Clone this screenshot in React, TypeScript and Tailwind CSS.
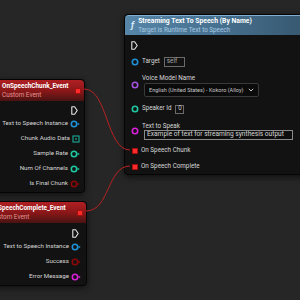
import React from "react"

const font = { fontFamily: "Roboto, 'Noto Sans', sans-serif" }

function Exec() {
  return (
    <svg width="7" height="9" viewBox="0 0 7 9" className="shrink-0">
      <path d="M0.8 0.8 H3.6 L6.2 4.5 L3.6 8.2 H0.8 Z" fill="none" stroke="#e8e8e8" strokeWidth="1.1" strokeLinejoin="round" />
    </svg>
  )
}

function Ring({ color, arrow = false }: { color: string; arrow?: boolean }) {
  return (
    <svg width={arrow ? 10 : 8} height="8" viewBox={arrow ? "0 0 10 8" : "0 0 8 8"} className="shrink-0">
      <circle cx="4" cy="4" r="2.7" fill="none" stroke={color} strokeWidth="1.6" />
      {arrow && <path d="M7.6 2.4 L9.6 4 L7.6 5.6 Z" fill={color} />}
    </svg>
  )
}

function Grid({ color }: { color: string }) {
  return (
    <svg width="8" height="8" viewBox="0 0 8 8" className="shrink-0">
      <rect x="1" y="1" width="6" height="6" fill="none" stroke={color} strokeWidth="1.2" />
      <rect x="3.2" y="3.2" width="1.6" height="1.6" fill={color} />
    </svg>
  )
}

function Delegate() {
  return <div className="w-[6px] h-[6px] bg-[#ff2b2b] border border-[#a01010] shrink-0" />
}

function OutRow({ label, children }: { label: string; children: React.ReactNode }) {
  return (
    <div className="h-[15px] flex items-center justify-end gap-[2px] text-[6.2px] text-[#d6d6d6]">
      <span className="whitespace-nowrap">{label}</span>
      {children}
    </div>
  )
}

function EventHeader({ title, pad }: { title: string; pad: string }) {
  return (
    <div className={`h-[21px] flex items-center justify-between rounded-t-[4px] bg-gradient-to-b from-[#b01f22] via-[#8c1719] to-[#4a1212] ${pad} pr-[3px]`}>
      <div className="flex flex-col leading-[9px]">
        <span className="text-[6.4px] font-bold text-white whitespace-nowrap">{title}</span>
        <span className="text-[6.4px] text-[#e89090] whitespace-nowrap">Custom Event</span>
      </div>
      <Delegate />
    </div>
  )
}

function ChunkNode() {
  return (
    <div className="absolute left-[-6px] top-[79px] w-[91px] h-[114px] rounded-[4px] bg-[#121212] border border-[#050505] shadow-[0_2px_6px_rgba(0,0,0,0.6)]">
      <EventHeader title="OnSpeechChunk_Event" pad="pl-[7px]" />
      <div className="mt-[3px] h-[12px] flex items-center justify-end pr-[6px]">
        <Exec />
      </div>
      <div className="pr-[4px]">
        <OutRow label="Text to Speech Instance"><Ring color="#1e90d8" arrow /></OutRow>
        <OutRow label="Chunk Audio Data"><Grid color="#1aa08c" /></OutRow>
        <OutRow label="Sample Rate"><Ring color="#1ec8a0" arrow /></OutRow>
        <OutRow label="Num Of Channels"><Ring color="#1ec8a0" arrow /></OutRow>
        <OutRow label="Is Final Chunk"><Ring color="#8c0808" arrow /></OutRow>
      </div>
    </div>
  )
}

function CompleteNode() {
  return (
    <div className="absolute left-[-20px] top-[201px] w-[107px] h-[85px] rounded-[4px] bg-[#121212] border border-[#050505] shadow-[0_2px_6px_rgba(0,0,0,0.6)]">
      <EventHeader title="OnSpeechComplete_Event" pad="pl-[9px]" />
      <div className="mt-[4px] h-[12px] flex items-center justify-end pr-[7px]">
        <Exec />
      </div>
      <div className="pr-[5px]">
        <OutRow label="Text to Speech Instance"><Ring color="#1e90d8" arrow /></OutRow>
        <OutRow label="Success"><Ring color="#8c0808" arrow /></OutRow>
        <OutRow label="Error Message"><Ring color="#d81ed8" arrow /></OutRow>
      </div>
    </div>
  )
}

function StreamNode() {
  return (
    <div className="absolute left-[124px] top-[14px] w-[200px] h-[161px] rounded-[4px] bg-[#121212] border border-[#050505] shadow-[0_2px_6px_rgba(0,0,0,0.6)] text-[6.3px] text-[#d8d8d8]">
      <div className="h-[20px] flex items-center gap-[4px] pl-[6px] rounded-t-[4px] bg-gradient-to-r from-[#5786a8] via-[#456f8e] to-[#34536a] border-t border-[#7fb0d0]">
        <span className="text-[9px] italic font-bold text-[#d8ecff] leading-none">ƒ</span>
        <div className="flex flex-col leading-[9px]">
          <span className="text-[6.8px] font-bold text-white whitespace-nowrap">Streaming Text To Speech (By Name)</span>
          <span className="text-[6.3px] text-[#a9c9e0] whitespace-nowrap">Target is Runtime Text to Speech</span>
        </div>
      </div>
      <div className="pl-[6px]">
        <div className="mt-[4px] h-[12px] flex items-center">
          <Exec />
        </div>
        <div className="mt-[5px] h-[12px] flex items-center gap-[3px]">
          <Ring color="#1e90d8" />
          <span>Target</span>
          <div className="ml-[1px] h-[10px] w-[21px] border border-[#6a6a6a] flex items-center px-[2px] text-[#a8a8a8] text-[6.3px]">self</div>
        </div>
        <div className="mt-[5px] flex items-center gap-[3px]">
          <Ring color="#a452e0" />
          <div className="flex flex-col">
            <span className="h-[10px] leading-[10px]">Voice Model Name</span>
            <div className="ml-[2px] h-[14px] w-[115px] bg-[#0b0b0b] border border-[#3a3a3a] rounded-[2px] flex items-center justify-between px-[4px] text-[5.5px] text-[#c8c8c8]">
              <span className="whitespace-nowrap">English (United States) - Kokoro (Alloy)</span>
              <svg width="6" height="4" viewBox="0 0 6 4">
                <path d="M0.8 0.8 L3 3 L5.2 0.8" fill="none" stroke="#c8c8c8" strokeWidth="1" />
              </svg>
            </div>
          </div>
        </div>
        <div className="mt-[6px] h-[12px] flex items-center gap-[3px]">
          <Ring color="#1ec8a0" />
          <span>Speaker Id</span>
          <div className="ml-[1px] h-[9px] w-[9px] border border-[#6a6a6a] flex items-center justify-center text-[6.3px] text-[#c8c8c8]">0</div>
        </div>
        <div className="mt-[7px] flex items-center gap-[3px]">
          <Ring color="#d81ed8" />
          <div className="flex flex-col">
            <span className="h-[8px] leading-[8px]">Text to Speak</span>
            <div className="ml-[2px] h-[10px] w-[149px] border border-[#8a8a8a] bg-[#0e0e0e] flex items-center px-[2px] text-[6.6px] text-[#d6d6d6] whitespace-nowrap">
              Example of text for streaming synthesis output
            </div>
          </div>
        </div>
        <div className="mt-[5px] h-[12px] flex items-center gap-[3px] pl-[1px]">
          <Delegate />
          <span>On Speech Chunk</span>
        </div>
        <div className="mt-[4px] h-[12px] flex items-center gap-[3px] pl-[1px]">
          <Delegate />
          <span>On Speech Complete</span>
        </div>
      </div>
    </div>
  )
}

export default function App() {
  return (
    <div className="relative w-[300px] h-[300px] overflow-hidden bg-[#262626]" style={font}>
      <StreamNode />
      <ChunkNode />
      <CompleteNode />
      <svg className="absolute inset-0 pointer-events-none" width="300" height="300">
        <path d="M84 89 C 108 89, 106 150, 130 150" fill="none" stroke="#b82222" strokeWidth="1" />
        <path d="M86 211 C 110 211, 107 166, 130 166" fill="none" stroke="#b82222" strokeWidth="1" />
      </svg>
    </div>
  )
}
